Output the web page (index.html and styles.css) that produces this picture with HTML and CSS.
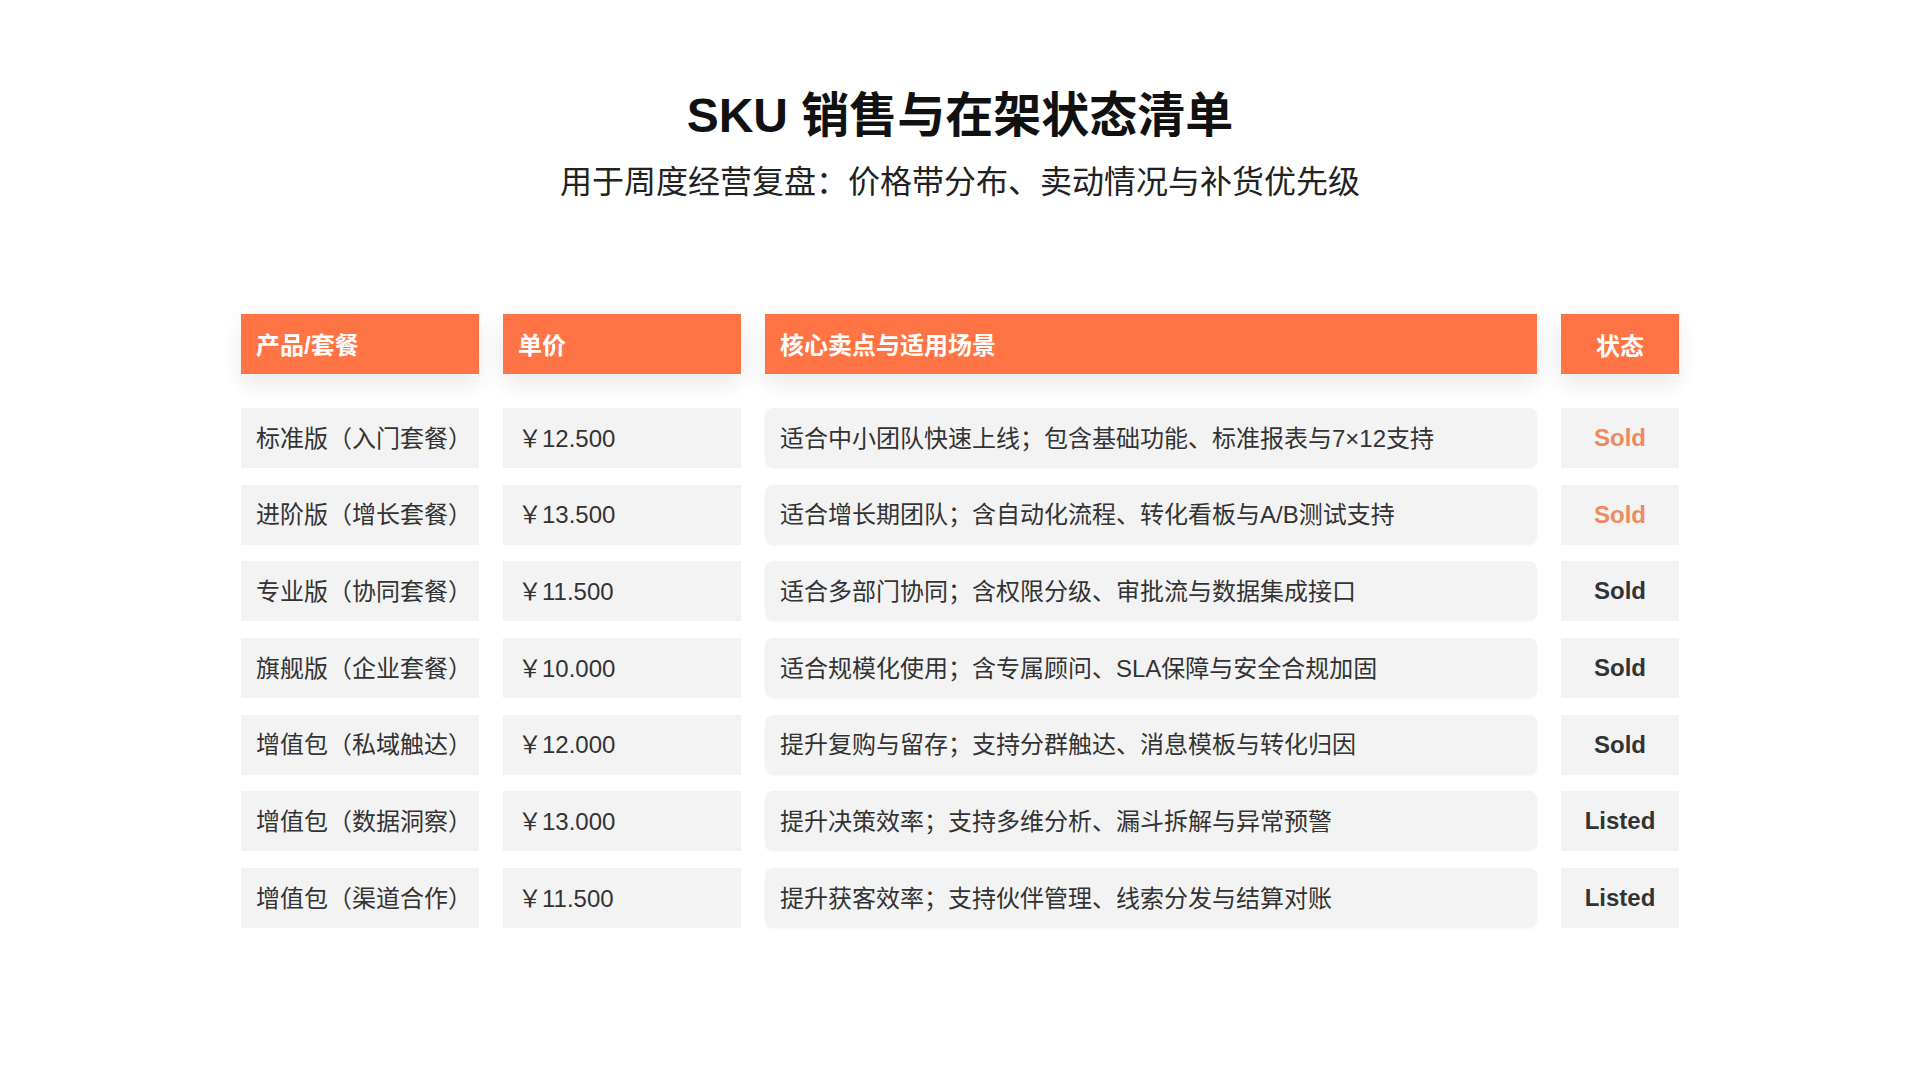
FILE: index.html
```html
<!DOCTYPE html>
<html lang="zh-CN">
<head>
<meta charset="utf-8">
<title>SKU 销售与在架状态清单</title>
<link rel="stylesheet" href="styles.css">
</head>
<body>
<main class="page">
  <header class="intro">
    <h1 class="title">SKU 销售与在架状态清单</h1>
    <p class="subtitle">用于周度经营复盘：价格带分布、卖动情况与补货优先级</p>
  </header>
  <section class="sheet">
    <div class="row head">
      <div class="cell hcell">产品/套餐</div>
      <div class="cell hcell">单价</div>
      <div class="cell hcell">核心卖点与适用场景</div>
      <div class="cell hcell center">状态</div>
    </div>
    <div class="body">
      <div class="row">
        <div class="cell">标准版（入门套餐）</div>
        <div class="cell">￥12.500</div>
        <div class="cell desc">适合中小团队快速上线；包含基础功能、标准报表与7×12支持</div>
        <div class="cell status sold">Sold</div>
      </div>
      <div class="row">
        <div class="cell">进阶版（增长套餐）</div>
        <div class="cell">￥13.500</div>
        <div class="cell desc">适合增长期团队；含自动化流程、转化看板与A/B测试支持</div>
        <div class="cell status sold">Sold</div>
      </div>
      <div class="row">
        <div class="cell">专业版（协同套餐）</div>
        <div class="cell">￥11.500</div>
        <div class="cell desc">适合多部门协同；含权限分级、审批流与数据集成接口</div>
        <div class="cell status">Sold</div>
      </div>
      <div class="row">
        <div class="cell">旗舰版（企业套餐）</div>
        <div class="cell">￥10.000</div>
        <div class="cell desc">适合规模化使用；含专属顾问、SLA保障与安全合规加固</div>
        <div class="cell status">Sold</div>
      </div>
      <div class="row">
        <div class="cell">增值包（私域触达）</div>
        <div class="cell">￥12.000</div>
        <div class="cell desc">提升复购与留存；支持分群触达、消息模板与转化归因</div>
        <div class="cell status">Sold</div>
      </div>
      <div class="row">
        <div class="cell">增值包（数据洞察）</div>
        <div class="cell">￥13.000</div>
        <div class="cell desc">提升决策效率；支持多维分析、漏斗拆解与异常预警</div>
        <div class="cell status">Listed</div>
      </div>
      <div class="row">
        <div class="cell">增值包（渠道合作）</div>
        <div class="cell">￥11.500</div>
        <div class="cell desc">提升获客效率；支持伙伴管理、线索分发与结算对账</div>
        <div class="cell status">Listed</div>
      </div>
    </div>
  </section>
</main>
</body>
</html>
```

FILE: styles.css
```css
html, body {
  margin: 0;
  padding: 0;
  background: #ffffff;
}

body {
  font-family: "Liberation Sans", "Noto Sans CJK SC", Arial, sans-serif;
  color: #333333;
}

.page {
  width: 1920px;
  height: 1080px;
  padding-top: 87px;
  box-sizing: border-box;
  display: flex;
  flex-direction: column;
  align-items: center;
}

.intro {
  display: flex;
  flex-direction: column;
  align-items: center;
  gap: 17px;
}

.title {
  margin: 0;
  font-size: 48px;
  line-height: 58px;
  font-weight: 700;
  color: #111111;
}

.subtitle {
  margin: 0;
  font-size: 32px;
  line-height: 40px;
  font-weight: 400;
  color: #222222;
}

.sheet {
  margin-top: 112px;
  width: 1438px;
  display: flex;
  flex-direction: column;
  gap: 34px;
}

.body {
  display: flex;
  flex-direction: column;
  gap: 16.7px;
}

.row {
  display: grid;
  grid-template-columns: 238px 238px 772px 118px;
  column-gap: 24px;
  height: 60px;
}

.cell {
  display: flex;
  align-items: center;
  padding: 0 15px 4px;
  background: #f3f3f3;
  font-size: 24px;
  color: #333333;
  white-space: nowrap;
}

.hcell {
  background: #ff7444;
  color: #ffffff;
  font-weight: 700;
  padding-bottom: 2px;
  box-shadow: 0 10px 26px rgba(0, 0, 0, 0.09);
}

.desc {
  border-radius: 8px;
  box-shadow: 0 1px 3px rgba(0, 0, 0, 0.03);
}

.center,
.status {
  justify-content: center;
  padding: 0;
}

.status {
  font-weight: 700;
  color: #333333;
}

.status.sold {
  color: #ef8b60;
}
```
